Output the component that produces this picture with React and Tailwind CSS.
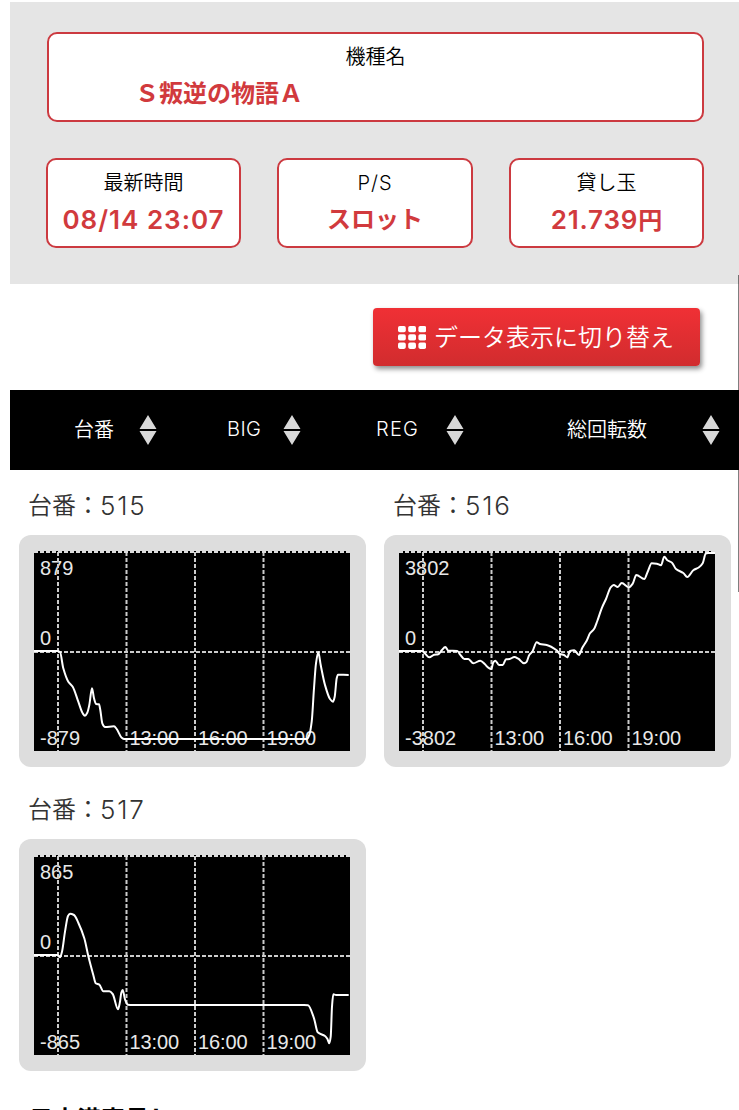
const machines = [
  {
    id: 515,
    max: 879,
    points: [
      [0, 100], [23, 100], [26, 101], [29.3, 117.3], [34.3, 130.7], [38.7, 135.7], [44.3, 150.7],
      [48.7, 162.3], [51, 164.7], [53.3, 161.7], [55.3, 154], [58, 137.3], [60, 147.3], [62, 153],
      [65, 153.3], [66.3, 159], [68.3, 172.3], [71, 176], [80, 175.3], [82.7, 178], [87.7, 186.7],
      [90.3, 188], [272.7, 188], [275.3, 184], [277.7, 170.7], [280, 137.3], [282, 112.3],
      [284.3, 101.3], [286.7, 114], [291, 134], [296, 148], [299, 150.7], [300.7, 145.7],
      [302.7, 127.3], [304, 123.7], [314.7, 124],
    ],
  },
  {
    id: 516,
    max: 3802,
    points: [
      [0, 100], [23, 100], [26, 102.5], [30.3, 106.3], [35.3, 103.7], [39.3, 103.3], [42.7, 99.3],
      [46.3, 96], [49.3, 99.7], [58.3, 100], [61, 103.3], [65.3, 108], [69.3, 108], [74.3, 112.3],
      [81.3, 109.7], [86, 113.3], [89.3, 116.7], [92.3, 118], [94.3, 111.3], [96.3, 109.7],
      [100, 114], [103.7, 114], [107, 108.3], [110.7, 108], [115.3, 106], [119.3, 107.7],
      [125, 112.3], [127.3, 111.3], [130.3, 104], [133.3, 100.7], [137.7, 91.3], [141, 93],
      [147.7, 94], [157.7, 99.3], [161, 103], [165, 104], [168.3, 106.3], [171, 100],
      [175.3, 99.3], [180, 104], [183.3, 96.7], [187.7, 89.7], [191, 82.3], [195, 78],
      [198.3, 70], [202.7, 57.3], [207, 48], [211.7, 36.3], [214.7, 34], [218.7, 36],
      [222.7, 32], [230, 36.3], [233.7, 32.7], [237.3, 24], [245.3, 28], [248.7, 20.7],
      [252.7, 12.3], [257.7, 12.7], [262, 14.3], [265.3, 5.7], [268.3, 9.3], [273, 11.7],
      [277, 18], [284.3, 22], [288.3, 26], [294.3, 19.3], [300, 16.3], [303.7, 12.3],
      [306.7, 2.7], [309, 2], [316, 2],
    ],
  },
  {
    id: 517,
    max: 865,
    points: [
      [0, 100], [23, 100], [26, 102.3], [28, 96.7], [31, 76.7], [34, 61], [36, 58.7], [40, 60],
      [44.3, 67.7], [50.3, 83.3], [54.3, 101], [59.3, 120], [61.7, 128.3], [65.3, 129.7],
      [69.3, 136.3], [75.3, 136.3], [78.7, 139], [84, 154.3], [86, 146.7], [87.3, 137.7],
      [88.7, 135], [91, 144.3], [94, 149.7], [98, 150], [270, 150], [274, 150.3], [280, 163.3],
      [283.7, 177.3], [291, 181], [293.3, 183.7], [295.3, 188.3], [296.7, 181.7], [298, 151.7],
      [299.3, 139.3], [302, 140], [314.7, 140],
    ],
  },
];

const times = [
  { x: 92.5, label: "13:00" },
  { x: 161, label: "16:00" },
  { x: 229.5, label: "19:00" },
];

// Smooth curve that stays flat at the peaks
function linePath(points) {
  const slope = (i) => {
    if (i === 0 || i === points.length - 1) return 0;
    const [x0, y0] = points[i - 1];
    const [x1, y1] = points[i];
    const [x2, y2] = points[i + 1];
    const a = (y1 - y0) / (x1 - x0);
    const b = (y2 - y1) / (x2 - x1);
    return a * b <= 0 ? 0 : (2 * a * b) / (a + b);
  };
  let d = `M${points[0][0]} ${points[0][1]}`;
  for (let i = 1; i < points.length; i++) {
    const [x0, y0] = points[i - 1];
    const [x1, y1] = points[i];
    const h = (x1 - x0) / 3;
    d += `C${x0 + h} ${y0 + slope(i - 1) * h} ${x1 - h} ${y1 - slope(i) * h} ${x1} ${y1}`;
  }
  return d;
}

function Chart({ max, points }) {
  return (
    <svg width="316" height="200" viewBox="0 0 316 200" className="block bg-black">
      <g fill="#e8e8e8" fontSize="20" fontFamily="Liberation Sans, Arial, sans-serif">
        <text x="6" y="24">{max}</text>
        <text x="6" y="94">0</text>
        <text x="6" y="194">-{max}</text>
        {times.map((t) => (
          <text key={t.label} x={t.x + 3} y="194" textLength="49.5">{t.label}</text>
        ))}
      </g>
      <g stroke="#ccc" strokeWidth="2" strokeDasharray="4 2">
        <path d="M24 1V200" />
        {times.map((t) => (
          <path key={t.label} d={`M${t.x} 1V200`} />
        ))}
        <path d="M0 101H316" />
      </g>
      <path d="M0 1H316" stroke="#ddd" strokeWidth="2" strokeDasharray="4 2" />
      <path d={linePath(points)} fill="none" stroke="#fff" strokeWidth="2" strokeLinejoin="round" />
    </svg>
  );
}

function Machine({ id, max, points }) {
  return (
    <div className="h-[304px] w-[365px] pl-[9px]">
      <h3 className="flex h-[65px] items-center pt-[7px] pl-[9px] text-2xl font-[350] text-[#333]">
        台番：<span className="text-[26px] font-light tracking-[1.8px]">{id}</span>
      </h3>
      <div className="h-[232px] w-[347px] rounded-xl bg-[#ddd] px-[15px] py-4">
        <Chart max={max} points={points} />
      </div>
    </div>
  );
}

function InfoBox({ label, children }) {
  return (
    <div className="h-[90px] rounded-[10px] border-2 border-[#cc3a40] bg-white pt-[7px] text-center">
      <p className="text-xl leading-8 font-[350] text-black">{label}</p>
      <p className="pt-px text-2xl leading-10 font-semibold text-[#d13a3d]">{children}</p>
    </div>
  );
}

function SortIcon() {
  return (
    <svg width="18" height="32" viewBox="0 0 18 32" className="shrink-0">
      <path d="M9 1L17.5 15H0.5Z M0.5 17H17.5L9 31Z" fill="#d8d8d8" />
    </svg>
  );
}

function GridIcon() {
  return (
    <svg width="28" height="23" viewBox="0 0 28 23" fill="#fff">
      {[0, 8.3, 16.6].map((y) =>
        [0, 10.2, 20.4].map((x) => (
          <rect key={`${x}-${y}`} x={x} y={y} width="7.8" height="6.3" rx="1.8" />
        ))
      )}
    </svg>
  );
}

function App() {
  return (
    <div className="relative h-[1110px] overflow-hidden bg-white pt-[2px] pl-[10px] font-['Inter','Noto_Sans_CJK_JP',sans-serif]">
      {/* Machine info */}
      <section className="h-[282px] bg-[#e5e5e5] pt-[30px] pr-[35px] pl-9">
        <div className="ml-px h-[90px] rounded-[10px] border-2 border-[#cc3a40] bg-white pt-[7px]">
          <p className="text-center text-xl leading-8 font-[350] text-black">機種名</p>
          <p className="pt-px pl-[86px] text-2xl leading-10 font-semibold text-[#d13a3d]">Ｓ叛逆の物語Ａ</p>
        </div>
        <div className="mt-9 grid grid-cols-[195px_196px_195px] justify-between">
          <InfoBox label="最新時間">
            <span className="text-[26px] tracking-[1px]">08/14 23:07</span>
          </InfoBox>
          <InfoBox label={<span className="tracking-[1px]">P/S</span>}>スロット</InfoBox>
          <InfoBox label="貸し玉">
            <span className="text-[26px] tracking-[0.8px]">21.739</span>円
          </InfoBox>
        </div>
      </section>

      {/* Switch button */}
      <div className="flex h-[106px] justify-end pt-6 pr-[39px]">
        <button className="flex h-[58px] w-[327px] items-center gap-2 rounded bg-linear-to-b from-[#f03035] to-[#d12c2e] pl-[25px] text-2xl font-[350] whitespace-nowrap text-white shadow-[2px_3px_5px_rgba(0,0,0,0.45)]">
          <GridIcon />
          <span className="pt-px">データ表示に切り替え</span>
        </button>
      </div>

      {/* Sort header */}
      <nav className="flex h-20 items-center bg-black text-xl font-[350] text-white">
        <div className="flex w-[147px] items-center justify-between pl-16"><span className="pb-px">台番</span><SortIcon /></div>
        <div className="flex w-[144px] items-center justify-between pl-[70px]"><span className="pb-0.5 font-light tracking-[0.4px]">BIG</span><SortIcon /></div>
        <div className="flex w-[163px] items-center justify-between pl-[75px]"><span className="pb-0.5 font-light tracking-[1.2px]">REG</span><SortIcon /></div>
        <div className="flex w-[256px] items-center justify-between pl-[103px]"><span className="pb-px">総回転数</span><SortIcon /></div>
      </nav>

      {/* Charts */}
      <main className="flex w-[740px] flex-wrap">
        {machines.map((m) => (
          <Machine key={m.id} {...m} />
        ))}
      </main>

      <h2 className="pt-[26px] pl-[19px] text-2xl leading-8 font-bold text-black">日本満喜見し</h2>

      {/* Scrollbar */}
      <div className="absolute top-[275px] right-0 h-[317px] w-px bg-black/50" />
    </div>
  );
}

export default App;
